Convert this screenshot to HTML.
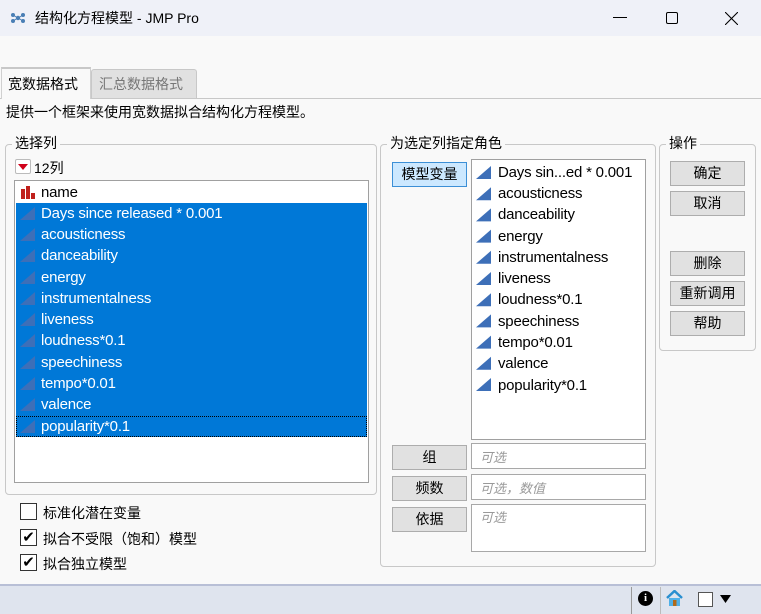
<!DOCTYPE html>
<html><head><meta charset="utf-8"><style>
*{margin:0;padding:0;box-sizing:border-box}
body{width:761px;height:614px;overflow:hidden;background:#f9f9f9;font-family:"Liberation Sans","Noto Sans CJK SC",sans-serif;font-size:14px;color:#000;position:relative}
.a{position:absolute}
.title{left:0;top:0;width:761px;height:36px;background:#eff1f8}
.grp{border:1px solid #c8c8c8;border-radius:4px}
.lg{background:#f9f9f9;padding:0 3px;font-size:14px;line-height:16px}
.list{background:#fff;border:1px solid #a0a0a0}
.row{position:absolute;left:1px;height:22px;line-height:21px;font-size:15px;padding-left:25px;white-space:nowrap;letter-spacing:-0.2px}
.sel{color:#fff;width:350px}
.tri{position:absolute;left:4px;top:4px;width:15px;height:13px}
.btn{position:absolute;background:#e1e1e1;border:1px solid #adadad;text-align:center;font-size:14px;line-height:22px}
.fld{position:absolute;background:#fff;border:1px solid #a8a8a8;color:#999;font-style:italic;font-size:13px;padding:3px 8px}
.cb{position:absolute;left:20px;width:17px;height:17px;border:1px solid #333;background:#fff;font-size:15px;line-height:15px;text-align:center}
.cbl{position:absolute;left:43px;font-size:14px}
</style></head><body>
<div class="a title"></div>
<svg class="a" style="left:10px;top:10px" width="16" height="16" viewBox="0 0 16 16"><g fill="#4a7fb5"><circle cx="3" cy="5" r="2"/><circle cx="13" cy="5" r="2"/><circle cx="3" cy="11" r="2"/><circle cx="13" cy="11" r="2"/><circle cx="8" cy="8" r="2.2"/></g><path d="M3 5L13 11M13 5L3 11" stroke="#4a7fb5"/></svg>
<div class="a" style="left:35px;top:8px;font-size:14px">结构化方程模型 - JMP Pro</div>
<div class="a" style="left:613px;top:17px;width:14px;height:1px;background:#000"></div>
<div class="a" style="left:666px;top:12px;width:12px;height:12px;border:1px solid #000;border-radius:2px"></div>
<svg class="a" style="left:725px;top:12px" width="13" height="13"><path d="M0 0L13 13M13 0L0 13" stroke="#000" stroke-width="1.1"/></svg>

<div class="a" style="left:0;top:98px;width:761px;height:1px;background:#c8c8c8"></div>
<div class="a" style="left:1px;top:67px;width:90px;height:32px;background:#f9f9f9;border-top:2px solid #c8c8c8;border-left:1px solid #d0d0d0;border-right:1px solid #d0d0d0"></div>
<div class="a" style="left:8px;top:74px;font-size:14px">宽数据格式</div>
<div class="a" style="left:91px;top:69px;width:106px;height:29px;background:#e1e1e1;border:1px solid #c8c8c8;border-bottom:none;border-radius:3px 3px 0 0"></div>
<div class="a" style="left:99px;top:74px;font-size:14px;color:#777">汇总数据格式</div>
<div class="a" style="left:6px;top:102px;font-size:14px">提供一个框架来使用宽数据拟合结构化方程模型。</div>

<div class="a grp" style="left:5px;top:144px;width:372px;height:351px"></div>
<div class="a lg" style="left:12px;top:135px">选择列</div>
<div class="a" style="left:15px;top:159px;width:16px;height:15px;border:1px solid #bbb;border-radius:2px;background:#fff"></div>
<svg class="a" style="left:18px;top:164px" width="10" height="6"><path d="M0 0H10L5 6Z" fill="#d0021b"/></svg>
<div class="a" style="left:34px;top:158px;font-size:14px">12列</div>
<div class="a list" style="left:14px;top:180px;width:355px;height:303px">
<div class="a" style="left:1px;top:22px;width:351px;height:234px;background:#0078d7"></div>
<div class="a" style="left:1px;top:235px;width:351px;height:21px;outline:1px dotted #000;outline-offset:-1px"></div>
<div class="row" style="top:1px"><svg class="tri" viewBox="0 0 15 13"><path d="M1 3h4v10H1zM6 0h4v13H6zM11 7h4v6h-4z" fill="#c0201c"/></svg>name</div>
<div class="row sel" style="top:22px"><svg class="tri" viewBox="0 0 15 13"><path d="M0 13L15 0V13Z" fill="#3d6fb8"/></svg>Days since released * 0.001</div>
<div class="row sel" style="top:43px"><svg class="tri" viewBox="0 0 15 13"><path d="M0 13L15 0V13Z" fill="#3d6fb8"/></svg>acousticness</div>
<div class="row sel" style="top:64px"><svg class="tri" viewBox="0 0 15 13"><path d="M0 13L15 0V13Z" fill="#3d6fb8"/></svg>danceability</div>
<div class="row sel" style="top:86px"><svg class="tri" viewBox="0 0 15 13"><path d="M0 13L15 0V13Z" fill="#3d6fb8"/></svg>energy</div>
<div class="row sel" style="top:107px"><svg class="tri" viewBox="0 0 15 13"><path d="M0 13L15 0V13Z" fill="#3d6fb8"/></svg>instrumentalness</div>
<div class="row sel" style="top:128px"><svg class="tri" viewBox="0 0 15 13"><path d="M0 13L15 0V13Z" fill="#3d6fb8"/></svg>liveness</div>
<div class="row sel" style="top:149px"><svg class="tri" viewBox="0 0 15 13"><path d="M0 13L15 0V13Z" fill="#3d6fb8"/></svg>loudness*0.1</div>
<div class="row sel" style="top:171px"><svg class="tri" viewBox="0 0 15 13"><path d="M0 13L15 0V13Z" fill="#3d6fb8"/></svg>speechiness</div>
<div class="row sel" style="top:192px"><svg class="tri" viewBox="0 0 15 13"><path d="M0 13L15 0V13Z" fill="#3d6fb8"/></svg>tempo*0.01</div>
<div class="row sel" style="top:213px"><svg class="tri" viewBox="0 0 15 13"><path d="M0 13L15 0V13Z" fill="#3d6fb8"/></svg>valence</div>
<div class="row sel" style="top:235px"><svg class="tri" viewBox="0 0 15 13"><path d="M0 13L15 0V13Z" fill="#3d6fb8"/></svg>popularity*0.1</div>
</div>

<div class="cb" style="top:503px"></div><div class="cbl" style="top:503px">标准化潜在变量</div>
<div class="cb" style="top:529px">✔</div><div class="cbl" style="top:529px">拟合不受限（饱和）模型</div>
<div class="cb" style="top:554px">✔</div><div class="cbl" style="top:554px">拟合独立模型</div>

<div class="a grp" style="left:380px;top:144px;width:276px;height:423px"></div>
<div class="a lg" style="left:387px;top:135px">为选定列指定角色</div>
<div class="btn" style="left:392px;top:162px;width:75px;height:25px;background:#cce8ff;border-color:#3c8fd6">模型变量</div>
<div class="a list" style="left:471px;top:159px;width:175px;height:281px">
<div class="row" style="top:2px">Days sin...ed * 0.001</div>
<div class="row" style="top:23px">acousticness</div>
<div class="row" style="top:44px">danceability</div>
<div class="row" style="top:66px">energy</div>
<div class="row" style="top:87px">instrumentalness</div>
<div class="row" style="top:108px">liveness</div>
<div class="row" style="top:129px">loudness*0.1</div>
<div class="row" style="top:151px">speechiness</div>
<div class="row" style="top:172px">tempo*0.01</div>
<div class="row" style="top:193px">valence</div>
<div class="row" style="top:215px">popularity*0.1</div>
</div>
<svg class="a" style="left:476px;top:166px" width="16" height="240"><g fill="#3d6fb8">
<path d="M0 13L15 0V13Z"/><path transform="translate(0,21.2)" d="M0 13L15 0V13Z"/><path transform="translate(0,42.4)" d="M0 13L15 0V13Z"/><path transform="translate(0,63.6)" d="M0 13L15 0V13Z"/><path transform="translate(0,84.8)" d="M0 13L15 0V13Z"/><path transform="translate(0,106)" d="M0 13L15 0V13Z"/><path transform="translate(0,127.2)" d="M0 13L15 0V13Z"/><path transform="translate(0,148.4)" d="M0 13L15 0V13Z"/><path transform="translate(0,169.6)" d="M0 13L15 0V13Z"/><path transform="translate(0,190.8)" d="M0 13L15 0V13Z"/><path transform="translate(0,212)" d="M0 13L15 0V13Z"/></g></svg>
<div class="btn" style="left:392px;top:445px;width:75px;height:25px">组</div>
<div class="btn" style="left:392px;top:476px;width:75px;height:25px">频数</div>
<div class="btn" style="left:392px;top:507px;width:75px;height:25px">依据</div>
<div class="fld" style="left:471px;top:443px;width:175px;height:26px">可选</div>
<div class="fld" style="left:471px;top:474px;width:175px;height:26px">可选，数值</div>
<div class="fld" style="left:471px;top:504px;width:175px;height:48px;padding-top:2px">可选</div>

<div class="a grp" style="left:659px;top:144px;width:97px;height:207px"></div>
<div class="a lg" style="left:666px;top:135px">操作</div>
<div class="btn" style="left:670px;top:161px;width:75px;height:25px">确定</div>
<div class="btn" style="left:670px;top:191px;width:75px;height:25px">取消</div>
<div class="btn" style="left:670px;top:251px;width:75px;height:25px">删除</div>
<div class="btn" style="left:670px;top:281px;width:75px;height:25px">重新调用</div>
<div class="btn" style="left:670px;top:311px;width:75px;height:25px">帮助</div>

<div class="a" style="left:0;top:584px;width:761px;height:30px;background:#dfe4ee;border-top:2px solid #b8bfd6"></div>
<div class="a" style="left:631px;top:587px;width:1px;height:27px;background:#999"></div>
<div class="a" style="left:660px;top:587px;width:1px;height:27px;background:#bbb"></div>
<div class="a" style="left:638px;top:591px;width:15px;height:15px;border-radius:50%;background:#000;color:#fff;font-size:11px;font-weight:bold;text-align:center;line-height:15px;font-family:'Liberation Serif',serif">i</div>
<svg class="a" style="left:666px;top:590px" width="17" height="17"><path d="M1 8L8.5 1L16 8" stroke="#2a8fd0" stroke-width="2.5" fill="none"/><path d="M3 8V16H14V8" fill="#4fb0e8"/><rect x="7" y="10" width="3.5" height="6" fill="#b06a1a"/></svg>
<div class="a" style="left:698px;top:592px;width:15px;height:15px;background:#fff;border:1px solid #555"></div>
<svg class="a" style="left:720px;top:595px" width="11" height="8"><path d="M0 0H11L5.5 8Z" fill="#000"/></svg>
</body></html>
